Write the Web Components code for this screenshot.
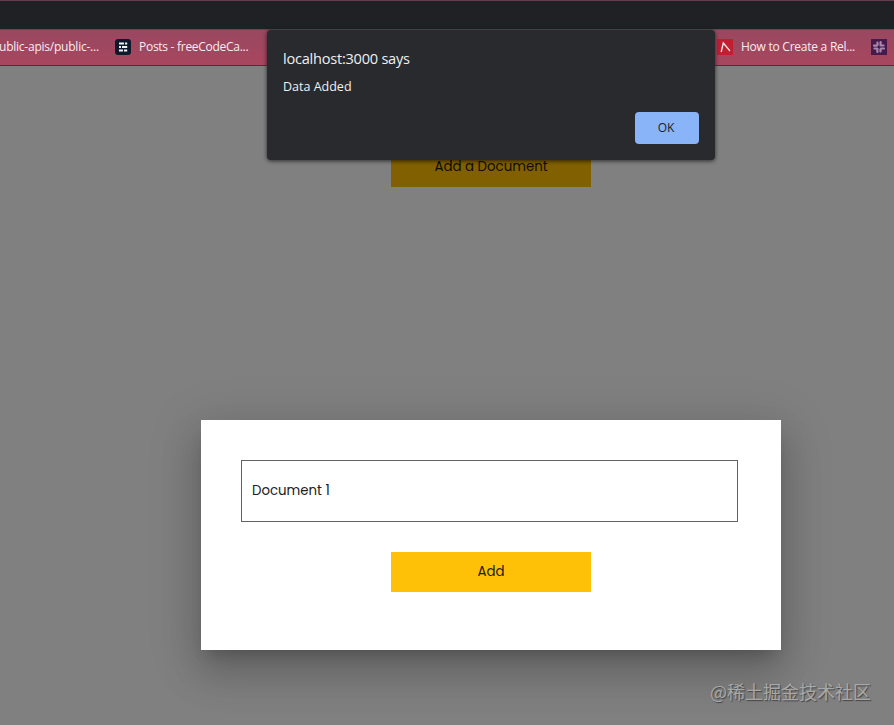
<!DOCTYPE html>
<html lang="en"><head><meta charset="utf-8"><title>Documents</title>
<style>html,body{margin:0;height:100%;overflow:hidden}body{background:#808080}</style></head>
<body><app-screen></app-screen>
<script>
const define=(name,html)=>customElements.define(name,class extends HTMLElement{
  constructor(){super();this.attachShadow({mode:'open'}).innerHTML=html;}
});
define('bookmark-item',`<style>
:host{display:flex;align-items:center;gap:8px;white-space:nowrap;font:12px/18px "Open Sans",sans-serif;color:#f9ebef}
::slotted(svg){display:block;width:16px;height:16px;flex:none}
.label{letter-spacing:var(--track,0)}</style><slot name="icon"></slot><span class="label"><slot></slot></span>`);
define('browser-chrome',`<style>
:host{display:block;height:66px;box-sizing:border-box;border-top:1px solid #633e50;background:#202124}
.tools{height:28px}
.bar{height:37px;box-sizing:border-box;display:grid;grid-template-columns:115px 602px 154px 23px;align-items:center;padding-bottom:2px;border-top:1px solid #7d3b50;border-bottom:1px solid #4e303a;background:linear-gradient(#984860,#a8465f)}
.first{gap:0;margin-left:-1px}
</style><div class="tools"></div><div class="bar">
<bookmark-item class="first" style="--track:-.23px">ublic-apis/public-...</bookmark-item>
<bookmark-item style="--track:-.28px"><svg slot="icon" viewBox="0 0 16 16"><rect width="16" height="16" rx="3" fill="#0e1a2b"/><path d="M4 4.5h5M10 4.5h2.2M4 8h2M7 8h5.2M4 11.5h4M9 11.5h3.2" stroke="#edf4f5" stroke-width="2"/></svg>Posts - freeCodeCa...</bookmark-item>
<bookmark-item style="--track:-.25px"><svg slot="icon" viewBox="0 0 16 16"><rect width="16" height="16" fill="#c31d31"/><path d="M4.2 13 6.3 4 13 12" fill="none" stroke="#f8e5e8" stroke-width="1.3"/></svg>How to Create a Rel...</bookmark-item>
<bookmark-item><svg slot="icon" viewBox="0 0 16 16"><rect width="16" height="16" fill="#48194b"/><g stroke="#a98aac" stroke-width="2.2" stroke-linecap="round"><path d="M6.5 3.5V6M3 6.6h3M9.6 3v3.5M10.2 6.5h2.3M6.4 9.8V13M3.5 9.5H6M9.5 10.2v2.3M10 9.5h3"/></g></svg></bookmark-item>
</div>`);
define('action-button',`<style>
:host{display:flex;width:200px;height:40px;align-items:center;justify-content:center;background:var(--fill,#ffc107);color:#202020;font:13.333px/20px Poppins,"Open Sans",sans-serif}
</style><span><slot></slot></span>`);
define('document-modal',`<style>
:host{display:flex;flex-direction:column;align-items:center;width:580px;height:230px;padding:40px;box-sizing:border-box;background:#fff;box-shadow:0 11px 15px -7px #0003,0 24px 38px 3px #00000024,0 9px 46px 8px #0000001f}
.field{align-self:flex-start;width:497px;height:62px;box-sizing:border-box;border:1px solid #626262;padding:0 10px;display:flex;align-items:center;margin-bottom:30px;font:13.333px/20px Poppins,"Open Sans",sans-serif;color:#202020}
</style><div class="field">Document 1</div><action-button>Add</action-button>`);
define('alert-dialog',`<style>
:host{display:flex;flex-direction:column;width:448px;height:130px;box-sizing:border-box;padding:16px;border-radius:4px;background:#292a2d;color:#eef0f2;box-shadow:0 1px 4px #000a;font-family:"Open Sans",sans-serif}
.title{font-size:14.6px;line-height:24px;letter-spacing:-.25px}
.msg{font-size:12.5px;line-height:20px;margin-top:7px}
.ok{align-self:flex-end;width:64px;height:32px;margin-top:15px;padding:0 2px 2px 0;box-sizing:border-box;border-radius:4px;background:#8ab4f8;color:#202124;display:grid;place-items:center;font-size:12px;font-weight:500;flex:none}
</style><div class="title">localhost:3000 says</div><div class="msg">Data Added</div><div class="ok">OK</div>`);
define('app-screen',`<style>
:host{display:block;position:relative;width:894px;height:725px;overflow:hidden;background:#808080}
main{display:flex;flex-direction:column;align-items:center;width:580px;margin-left:201px;padding-top:81px}
.open{--fill:#806000;color:#100c00}
document-modal{margin-top:233px}
alert-dialog{position:absolute;left:267px;top:30px}
.mark{position:absolute;left:710px;top:678px;white-space:nowrap;font:18px/26px "Noto Sans CJK SC",sans-serif;color:#a8a8a8;text-shadow:1px 1px 1px #444}
</style><browser-chrome></browser-chrome><main><action-button class="open">Add a Document</action-button><document-modal></document-modal></main><alert-dialog></alert-dialog><div class="mark">@稀土掘金技术社区</div>`);
</script></body></html>
